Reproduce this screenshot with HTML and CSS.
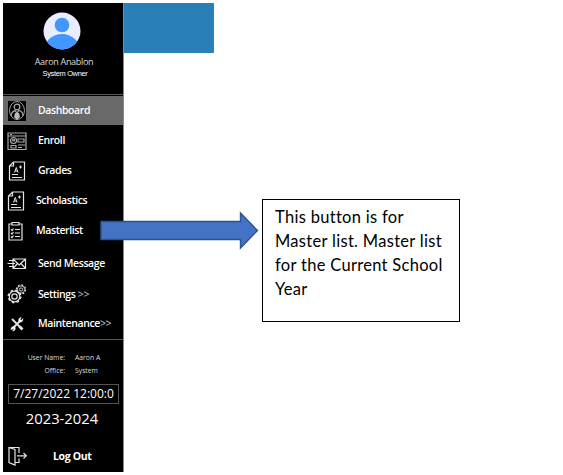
FILE: index.html
```html
<!DOCTYPE html>
<html lang="en">
<head>
<meta charset="utf-8">
<title>Dashboard</title>
<link rel="stylesheet" href="styles.css">
</head>
<body>
<svg class="defs" width="0" height="0">
  <symbol id="paper" viewBox="0 0 18 20">
    <path d="M5.500 1H16.500V19H1.500V5ZM5.500 1V5H1.500"/>
    <path d="M6.500 11.500 8.300 6.500 10 11.500M7 10H9.600M11 6H14M12.500 4.500V7.500" stroke-width="1"/>
    <path d="M4 13.500H10M4 16.500H14"/>
  </symbol>
</svg>
<div class="screen">
  <aside class="sidebar">
    <header class="profile">
      <svg class="avatar" viewBox="0 0 38 38">
        <clipPath id="round"><circle cx="19" cy="19" r="18.500"/></clipPath>
        <g clip-path="url(#round)"><rect width="38" height="38" fill="#e8eeff"/><circle cx="19" cy="13" r="7.300" fill="#4196ff"/><circle cx="19" cy="41" r="19" fill="#4196ff"/></g>
      </svg>
      <div class="name">Aaron Anablon</div>
      <div class="role">System Owner</div>
    </header>
    <nav class="menu">
      <a class="item active"><svg class="icon" viewBox="0 0 20 20"><path d="M1 0H19V20H1Z" fill="#000" stroke="none"/><g class="dim"><ellipse cx="10" cy="9.500" rx="7.500" ry="9" stroke-width=".9"/><circle cx="10" cy="6" r="2.800"/><path d="M4 15C4 11 7 10 8 9.500L10 12 12 9.500C14 10 16 11 16 15"/></g><path d="M8 12H12L13 16 10 19 7 16Z" fill="#bbb" stroke="none"/></svg><span>Dashboard</span></a>
      <a class="item enroll"><svg class="icon dim" viewBox="0 0 20 20"><path d="M1 2H19V18.500H1ZM1 5H19M3 3.500H5M11 8H17V11H11ZM11 14H18M11 16.500H15M4 14.500H9V17H4Z"/><circle cx="6.500" cy="9.500" r="3"/><circle cx="6.500" cy="9" r="1"/></svg><span>Enroll</span></a>
      <a class="item grades"><svg class="icon paper"><use href="#paper"/></svg><span>Grades</span></a>
      <a class="item scholastics"><svg class="icon paper"><use href="#paper"/></svg><span>Scholastics</span></a>
      <a class="item masterlist"><svg class="icon" viewBox="0 0 20 20"><path d="M6 3H3V19H16V3H13M6 1.500H13V4H6ZM9 8.500H14M9 12H14M9 15.500H14"/><path d="M5 8.500 6 9.500 7.500 7.500M5 12 6 13 7.500 11M5 15.500 6 16.500 7.500 14.500"/></svg><span>Masterlist</span></a>
      <a class="item send"><svg class="icon" viewBox="0 0 20 20"><path d="M6 5H18.500V14.500H6ZM6 5 12.200 11 18.500 5M6 14.500 10.500 9.500M18.500 14.500 14 9.500M2 6.500H7M.500 9.500H8M2 12.500H7"/></svg><span>Send Message</span></a>
      <a class="item settings"><svg class="icon" viewBox="0 0 20 20"><circle cx="7.500" cy="12.500" r="2.700"/><circle cx="7.500" cy="12.500" r="5.300"/><circle cx="7.500" cy="12.500" r="6.300" stroke-width="1.300" stroke-dasharray="2.500 2.450"/><circle cx="14" cy="5.500" r="1.600" stroke-width=".9"/><circle cx="14" cy="5.500" r="3.700" stroke-width=".9"/><circle cx="14" cy="5.500" r="4.600" stroke-width="1.100" stroke-dasharray="1.800 1.800"/></svg><span>Settings <i>&gt;&gt;</i></span></a>
      <a class="item maintenance"><svg class="icon" viewBox="0 0 20 20"><path d="M5 5 15 15M14 6 5 15" stroke-width="1.800"/><path d="M12.500 12.500 15.500 15.500" stroke-width="2.700"/><path d="M16 4.500 14 6.500 13 5.500 14.500 3.500C11.500 3.500 11 6 12 8 14 9 16.500 7.500 16 4.500Z" fill="#fff" stroke-width=".3"/><path d="M4 16 6 14 7 15 5.500 17C8 17 9 15 8 13 6 11.500 3.500 13 4 16Z" fill="#fff" stroke-width=".3"/></svg><span>Maintenance<i>&gt;&gt;</i></span></a>
    </nav>
    <dl class="session">
      <dt>User Name:</dt><dd>Aaron A</dd>
      <dt>Office:</dt><dd>System</dd>
    </dl>
    <div class="clock">7/27/2022 12:00:0</div>
    <div class="year">2023-2024</div>
    <a class="logout"><svg class="icon" viewBox="0 0 20 20"><path d="M1 1.500 7 3.500V19L1 16.500ZM1 1.500H11V7M7 16.500H11V12.500M9 9.800H18M15.500 7 18.300 9.800 15.500 12.600"/></svg><span>Log Out</span></a>
  </aside>
  <main class="content">
    <div class="banner"></div>
    <p class="note">This button is for<br>Master list. Master list<br>for the Current School<br>Year</p>
  </main>
  <svg class="arrow" viewBox="0 0 160 40"><path d="M1 11.500H140.500V3L157.500 20.500 140.500 38V29.500H1Z" fill="#4472c4" stroke="#2f528f" stroke-width="1.400"/></svg>
</div>
</body>
</html>
```
FILE: styles.css
```css
* { box-sizing: border-box; }
body { margin: 0; background: #fff; font-family: "Open Sans", sans-serif; }
.defs { position: absolute; }
.screen { position: relative; display: flex; width: 563px; height: 475px; padding: 3px; }
.sidebar { width: 121px; height: 469px; flex: none; background: #000; color: #fff; border-right: 1px solid #8a8a8a; }
.profile { height: 92px; padding-top: 9px; border-bottom: 1px solid #555; text-align: center; }
.avatar { display: block; width: 38px; height: 38px; margin: 0 auto; position: relative; left: -1px; }
.name { margin-top: 5px; font: 9px/14px "Open Sans", sans-serif; letter-spacing: -.3px; color: #ddd; padding-left: 2px; }
.role { font: 7.500px/9px "Liberation Sans", sans-serif; letter-spacing: -.35px; padding-left: 4px; }
.menu { display: flex; flex-direction: column; height: 245px; padding-top: 1px; border-bottom: 1px solid #555; white-space: nowrap; }
.item { display: flex; align-items: center; height: 30px; flex: none; padding: 1px 0 0 4px; gap: 11px; font-size: 10.500px; font-weight: 600; line-height: 15px; letter-spacing: -.4px; }
.active { height: 29px; padding-top: 0; background: #696969; }
.icon { width: 20px; height: 20px; flex: none; fill: none; stroke: #e4e4e4; stroke-width: 1.200; }
.dim { stroke: #aaa; }
.paper { width: 18px; margin: 0 1px; }
.scholastics, .masterlist { gap: 9px; }
.scholastics .paper { margin: 0 2px 0 0; }
.masterlist .icon { margin-left: -1px; margin-right: 1px; }
.send { height: 34px; padding-top: 3px; }
.settings { height: 29px; }
.item i { font-style: normal; font-weight: 400; color: #ccc; }
.session { display: grid; grid-template-columns: 62px 1fr; column-gap: 10px; margin: 11px 0 0; font-size: 6.800px; line-height: 13px; color: #ddd; }
.session dt { text-align: right; }
.session dd { margin: 0; }
.clock { height: 20px; margin: 7px 4px 0 5px; border: 1px solid #555; text-align: center; font-size: 12px; line-height: 18px; white-space: nowrap; }
.year { margin-top: 4px; text-align: center; font-size: 14.800px; line-height: 20px; padding-right: 2px; }
.logout { display: flex; align-items: center; gap: 25px; height: 20px; margin-top: 18px; padding-left: 5px; font-size: 10.500px; font-weight: 700; letter-spacing: -.35px; }
.content { flex: 1; }
.banner { width: 90px; height: 50px; background: #2980b9; }
.note { width: 198px; height: 123px; margin: 146px 0 0 138px; padding: 5px 0 0 12px; border: 1px solid #000; background: #fff; color: #000; font: 16.500px/24px Lato, sans-serif; letter-spacing: .3px; white-space: nowrap; }
.arrow { position: absolute; left: 100px; top: 210px; width: 160px; height: 40px; }
```
